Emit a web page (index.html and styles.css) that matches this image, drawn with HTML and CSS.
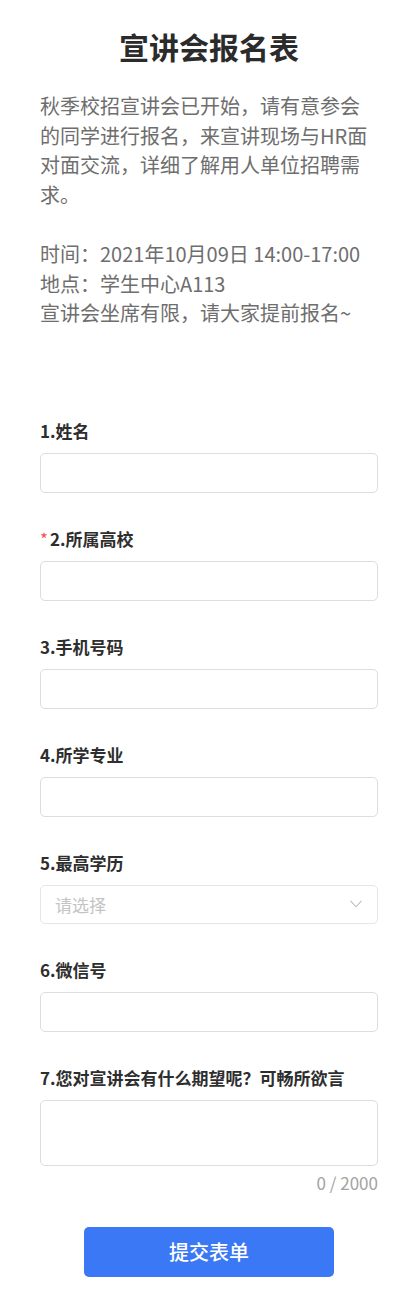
FILE: index.html
```html
<!DOCTYPE html>
<html lang="zh-CN">
<head>
<meta charset="utf-8">
<title>宣讲会报名表</title>
<link rel="stylesheet" href="styles.css">
</head>
<body>
<div class="page">
  <h1 class="title">宣讲会报名表</h1>
  <div class="intro">
    <p class="intro-p">秋季校招宣讲会已开始，请有意参会的同学进行报名，来宣讲现场与HR面对面交流，详细了解用人单位招聘需求。</p>
    <p class="intro-p intro-gap">时间：2021年10月09日 14:00-17:00<br>地点：学生中心A113<br>宣讲会坐席有限，请大家提前报名~</p>
  </div>
  <form class="form">
    <div class="item">
      <div class="label">1.姓名</div>
      <div class="field"></div>
    </div>
    <div class="item">
      <div class="label"><span class="req">*</span>2.所属高校</div>
      <div class="field"></div>
    </div>
    <div class="item">
      <div class="label">3.手机号码</div>
      <div class="field"></div>
    </div>
    <div class="item">
      <div class="label">4.所学专业</div>
      <div class="field"></div>
    </div>
    <div class="item">
      <div class="label">5.最高学历</div>
      <div class="field select">
        <span class="placeholder">请选择</span>
        <svg class="chev" width="12" height="8" viewBox="0 0 12 8"><path d="M0.5 0.8 L6 6.8 L11.5 0.8" fill="none" stroke="#bdbdbd" stroke-width="1.1"/></svg>
      </div>
    </div>
    <div class="item">
      <div class="label">6.微信号</div>
      <div class="field"></div>
    </div>
    <div class="item last">
      <div class="label">7.您对宣讲会有什么期望呢？可畅所欲言</div>
      <div class="field area"></div>
      <div class="counter">0 / 2000</div>
    </div>
    <div class="actions">
      <button type="button" class="submit">提交表单</button>
    </div>
  </form>
</div>
</body>
</html>
```
FILE: styles.css
```css
html, body {
  margin: 0;
  padding: 0;
  background: #ffffff;
}
body {
  font-family: "Noto Sans CJK SC", "Noto Sans", sans-serif;
  color: #333333;
}
.page {
  padding: 26px 40px 20px;
}
.title {
  margin: 0;
  font-size: 30px;
  line-height: 40px;
  font-weight: 700;
  text-align: center;
  color: #2b2b2b;
}
.intro {
  margin-top: 25px;
  color: #6e6e6e;
  font-size: 20px;
  line-height: 29.5px;
}
.intro-p {
  margin: 0;
}
.intro-gap {
  margin-top: 30px;
}
.form {
  margin-top: 91px;
}
.item {
  margin-bottom: 34px;
}
.item.last {
  margin-bottom: 0;
}
.label {
  font-size: 17px;
  line-height: 24px;
  font-weight: 700;
  color: #2e2e2e;
  margin-bottom: 10px;
}
.req {
  color: #f25555;
  font-weight: 400;
  margin-right: 2px;
}
.field {
  box-sizing: border-box;
  height: 40px;
  border: 1px solid #dddddd;
  border-radius: 5px;
  background: #fff;
}
.select {
  display: flex;
  align-items: center;
  justify-content: space-between;
  padding: 0 15px 0 14px;
  border-color: #e6e6e6;
  height: 39px;
}
.placeholder {
  font-size: 17px;
  color: #c4c4c4;
}
.area {
  height: 66px;
}
.counter {
  margin-top: 5px;
  text-align: right;
  font-size: 17px;
  line-height: 24px;
  color: #a3a3a3;
}
.actions {
  display: flex;
  justify-content: center;
  margin-top: 32px;
}
.submit {
  width: 250px;
  height: 50px;
  border: none;
  border-radius: 5px;
  background: #3b78f5;
  color: #ffffff;
  font-family: "Noto Sans CJK SC", sans-serif;
  font-size: 20px;
  font-weight: 500;
  cursor: pointer;
}
```
